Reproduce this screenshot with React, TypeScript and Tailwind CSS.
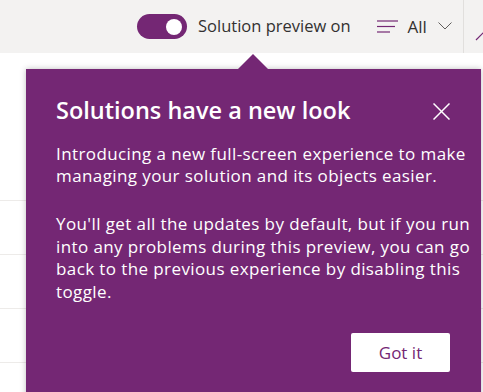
const rows = [0, 1, 2, 3]

function Toggle() {
  return (
    <div className="flex h-[25px] w-[50px] shrink-0 items-center justify-end rounded-full bg-[#742774] pr-[5px]">
      <div className="h-[16px] w-[16px] rounded-full bg-white" />
    </div>
  )
}

function FilterIcon() {
  return (
    <svg width="21" height="14" viewBox="0 0 21 14" className="block">
      <line x1="0" y1="1" x2="21" y2="1" stroke="#742774" strokeWidth="1.2" />
      <line x1="0" y1="6.5" x2="18" y2="6.5" stroke="#742774" strokeWidth="1.2" />
      <line x1="0" y1="12" x2="13" y2="12" stroke="#742774" strokeWidth="1.2" />
    </svg>
  )
}

function CloseIcon() {
  return (
    <svg width="17" height="17" viewBox="0 0 17 17" className="mt-[8px] block shrink-0">
      <line x1="0.5" y1="0.5" x2="16.5" y2="16.5" stroke="#fff" strokeWidth="1.5" />
      <line x1="16.5" y1="0.5" x2="0.5" y2="16.5" stroke="#fff" strokeWidth="1.5" />
    </svg>
  )
}

export default function App() {
  return (
    <div
      className="relative h-[392px] w-[483px] overflow-hidden bg-white"
      style={{ fontFamily: '"Open Sans", "Noto Sans", sans-serif' }}
    >
      <header className="flex h-[53px] items-center whitespace-nowrap bg-[#f3f2f1] pl-[137px]">
        <Toggle />
        <span className="ml-[11px] shrink-0 text-[16.5px] text-[#323130]">Solution preview on</span>
        <div className="ml-[26px] mt-[1px] shrink-0">
          <FilterIcon />
        </div>
        <span className="ml-[10px] shrink-0 text-[17px] text-[#323130]">All</span>
        <svg width="14" height="8" viewBox="0 0 14 8" className="ml-[11px] mb-[2px] shrink-0">
          <polyline points="0.5,0.5 7,7 13.5,0.5" fill="none" stroke="#605e5c" strokeWidth="1" />
        </svg>
        <div className="ml-[11px] h-full w-px shrink-0 bg-[#e1dfdd]" />
        <svg width="10" height="10" viewBox="0 0 10 10" className="ml-[11px] mt-[18px] shrink-0">
          <line x1="1" y1="9" x2="9" y2="1" stroke="#742774" strokeWidth="1.2" />
        </svg>
      </header>

      <div className="flex flex-col pt-[147px]">
        {rows.map((r) => (
          <div key={r} className="h-[54px] border-t border-[#edebe9]" />
        ))}
      </div>

      <div className="absolute left-[26px] top-[54px] w-[455px]">
        <svg width="30" height="15" viewBox="0 0 30 15" className="ml-[212px] block">
          <polygon points="0,15 15,0 30,15" fill="#742774" />
        </svg>
        <div className="h-[330px] whitespace-nowrap bg-[#742774] pl-[30px] pr-[31px] pt-[26px] text-white shadow-[0_0_6px_rgba(0,0,0,0.25)]">
          <div className="flex items-start justify-between">
            <h2 className="text-[23.5px] font-semibold leading-[30px]">Solutions have a new look</h2>
            <CloseIcon />
          </div>
          <p className="mt-[18px] text-[17px] leading-[22px] tracking-[0.4px]">
            Introducing a new full-screen experience to make
            <br />
            managing your solution and its objects easier.
          </p>
          <p className="mt-[26px] text-[17px] leading-[22.5px] tracking-[0.4px]">
            You'll get all the updates by default, but if you run
            <br />
            into any problems during this preview, you can go
            <br />
            back to the previous experience by disabling this
            <br />
            toggle.
          </p>
          <div className="mt-[30px] flex justify-end">
            <button className="h-[39px] w-[99px] rounded-[2px] bg-white text-[17px] text-[#742774]">
              Got it
            </button>
          </div>
        </div>
      </div>
    </div>
  )
}
